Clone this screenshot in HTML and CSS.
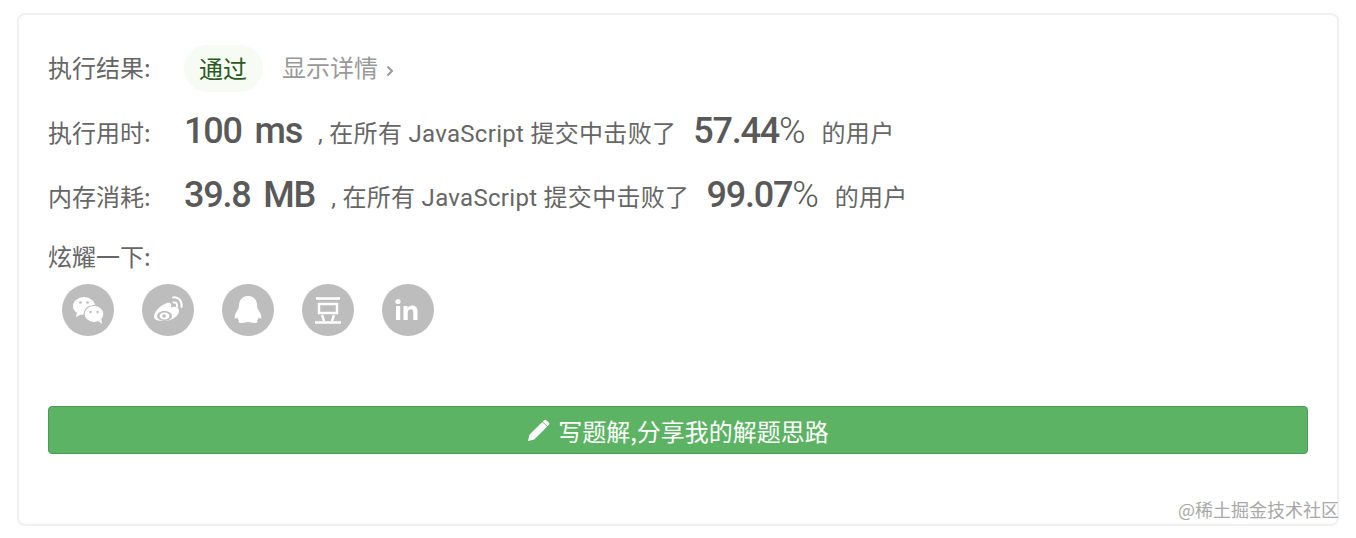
FILE: index.html
```html
<!DOCTYPE html>
<html lang="zh-CN">
<head>
  <meta charset="UTF-8">
  <title>提交结果</title>
  <link rel="stylesheet" href="styles.css">
</head>
<body>
  <div class="card">
    <div class="row result-row">
      <span class="label">执行结果:</span>
      <span class="pill">通过</span>
      <a class="details">显示详情
        <svg class="chevron" width="8" height="12" viewBox="0 0 8 12"><path d="M1.500 1.500l4.500 4.500-4.500 4.500" fill="none" stroke="currentColor" stroke-width="2"/></svg>
      </a>
    </div>
    <div class="row stat-row time-row">
      <span class="label">执行用时:</span>
      <span class="value">100 ms</span>
      <span class="text comma">, 在所有 JavaScript 提交中击败了</span>
      <span class="value percent">57.44<i>%</i></span>
      <span class="text">的用户</span>
    </div>
    <div class="row stat-row memory-row">
      <span class="label">内存消耗:</span>
      <span class="value">39.8 MB</span>
      <span class="text comma">, 在所有 JavaScript 提交中击败了</span>
      <span class="value percent">99.07<i>%</i></span>
      <span class="text">的用户</span>
    </div>
    <div class="share-title">炫耀一下:</div>
    <div class="share-icons">
      <!-- wechat -->
      <svg class="share" viewBox="0 0 52 52">
        <circle cx="26" cy="26" r="26" fill="#bdbdbd"/>
        <ellipse cx="22" cy="22" rx="11" ry="9" fill="#fff"/>
        <path d="M15 28l-1 5 6-3z" fill="#fff"/>
        <ellipse cx="32" cy="30" rx="10" ry="8.500" fill="#fff" stroke="#bdbdbd" stroke-width="1.200"/>
        <path d="M36 37l4 3-.5-5z" fill="#fff"/>
        <circle cx="18.500" cy="18.500" r="1.300" fill="#bdbdbd"/>
        <circle cx="25.500" cy="18.500" r="1.300" fill="#bdbdbd"/>
        <circle cx="28.500" cy="28" r="1.200" fill="#bdbdbd"/>
        <circle cx="35.500" cy="28" r="1.200" fill="#bdbdbd"/>
      </svg>
      <!-- weibo -->
      <svg class="share" viewBox="0 0 52 52">
        <circle cx="26" cy="26" r="26" fill="#bdbdbd"/>
        <path d="M12 33c0-6 7-12 13-14 4-1 5 1.500 4 4.500 4-1.500 8-.5 8 3 0 6-8 10.500-15 10.500-5 0-10-1-10-4z" fill="#fff"/>
        <ellipse cx="22.500" cy="32" rx="7.500" ry="5" fill="#bdbdbd"/>
        <ellipse cx="22.500" cy="32" rx="5" ry="3.500" fill="#fff"/>
        <circle cx="22" cy="32" r="1.800" fill="#bdbdbd"/>
        <path d="M31 13.500c5.500-1 9.500 3.500 8.500 9.500M31.500 18.500c2.500-.5 4 1 3.500 4" fill="none" stroke="#fff" stroke-width="2" stroke-linecap="round"/>
      </svg>
      <!-- qq -->
      <svg class="share" viewBox="0 0 52 52">
        <circle cx="26" cy="26" r="26" fill="#bdbdbd"/>
        <path d="M26 12c6 0 9 4.500 9 9.500 0 2 .5 3 1.500 4.500 1.500 2.500 3 5 2.800 8-.2 1.200-1.500.5-2.500-.8-.3 1.300-1 2.500-2 3.300 1 .5 1.200 1.500.2 2-2 .8-5.500.6-7.500-.4-.8.200-2.200.200-3 0-2 1-5.500 1.200-7.500.4-1-.5-.8-1.500.2-2-1-.8-1.700-2-2-3.300-1 1.300-2.300 2-2.500.8-.2-3 1.300-5.500 2.800-8 1-1.500 1.500-2.500 1.500-4.500 0-5 3-9.500 9-9.500z" fill="#fff"/>
      </svg>
      <!-- douban -->
      <svg class="share" viewBox="0 0 52 52">
        <circle cx="26" cy="26" r="26" fill="#bdbdbd"/>
        <path d="M14 14.500h24M13 38.500h26" stroke="#fff" stroke-width="2.400"/>
        <rect x="17" y="20" width="18" height="9" fill="none" stroke="#fff" stroke-width="2.400"/>
        <path d="M20 31l2 6M32 31l-2 6" stroke="#fff" stroke-width="2.400"/>
      </svg>
      <!-- linkedin -->
      <svg class="share" viewBox="0 0 52 52">
        <circle cx="26" cy="26" r="26" fill="#bdbdbd"/>
        <circle cx="16" cy="17.500" r="2.600" fill="#fff"/>
        <rect x="14" y="22" width="4.200" height="14" fill="#fff"/>
        <path d="M21.500 22h4v2c1-1.500 2.500-2.400 4.500-2.400 4 0 5.500 2.400 5.500 6.400v8h-4.200v-7.500c0-2-.6-3.300-2.300-3.300-2 0-3.300 1.300-3.300 3.500V36h-4.200z" fill="#fff"/>
      </svg>
    </div>
    <button class="solution-btn">
      <svg width="23" height="23" viewBox="0 0 24 24"><path d="M1 23l1.500-6.500L16 3l5 5L7.500 21.500zM17.500 1.500c1-1 2-1 3 0l2 2c1 1 1 2 0 3l-1 1-5-5z" fill="#fff"/></svg>
      写题解,分享我的解题思路
    </button>
  </div>
  <div class="watermark">@稀土掘金技术社区</div>
</body>
</html>
```

FILE: styles.css
```css
body {
  margin: 0;
  background: #fff;
  font-family: "Noto Sans CJK SC", sans-serif;
  color: #666;
}
.card {
  width: 1322px;
  height: 513px;
  margin: 13px 0 0 17px;
  padding: 29px 30px 0 29px;
  box-sizing: border-box;
  border: 2px solid #f0f0f0;
  border-radius: 8px;
  overflow: hidden;
}
.row {
  display: flex;
  align-items: center;
  font-size: 24px;
  white-space: nowrap;
}
.label {
  width: 136px;
  flex: none;
  padding-bottom: 3px;
  font-size: 24px;
  color: #666;
}
.result-row {
  height: 48px;
}
.pill {
  padding: 0 16px 0 15px;
  height: 47px;
  line-height: 45px;
  border-radius: 24px;
  background: #f6fbf4;
  color: #2b5a1e;
}
.details {
  margin-left: 19px;
  padding-bottom: 3px;
  color: #999;
}
.chevron {
  margin-left: 3px;
}
.stat-row {
  height: 48px;
}
.time-row {
  margin-top: 17px;
}
.memory-row {
  margin-top: 16px;
}
.value {
  padding-bottom: 4px;
  font-family: Roboto, sans-serif;
  font-weight: 500;
  font-size: 36px;
  letter-spacing: -1.200px;
  color: #595959;
  word-spacing: 5px;
}
.value i {
  font-style: normal;
  font-weight: 300;
}
.text {
  padding-bottom: 3px;
  font-family: Roboto, "Noto Sans CJK SC", sans-serif;
  letter-spacing: 0.3px;
}
.comma {
  margin-left: 16px;
}
.percent {
  margin: 0 17px;
}
.share-title {
  margin-top: 20px;
  font-size: 24px;
  line-height: 30px;
  height: 30px;
}
.share-icons {
  display: flex;
  gap: 28px;
  margin: 13px 0 0 14px;
}
.share {
  width: 52px;
  height: 52px;
  display: block;
}
.solution-btn {
  display: flex;
  align-items: center;
  justify-content: center;
  gap: 8px;
  width: 1260px;
  height: 48px;
  margin-top: 70px;
  padding: 0;
  border: 1px solid #4a9a55;
  border-radius: 4px;
  background: #5cb364;
  color: #fff;
  font-family: "Noto Sans CJK SC", sans-serif;
  font-size: 24px;
}
.watermark {
  position: absolute;
  right: 17px;
  top: 496px;
  font-size: 18px;
  line-height: 26px;
  color: #a8a8a8;
}
```
